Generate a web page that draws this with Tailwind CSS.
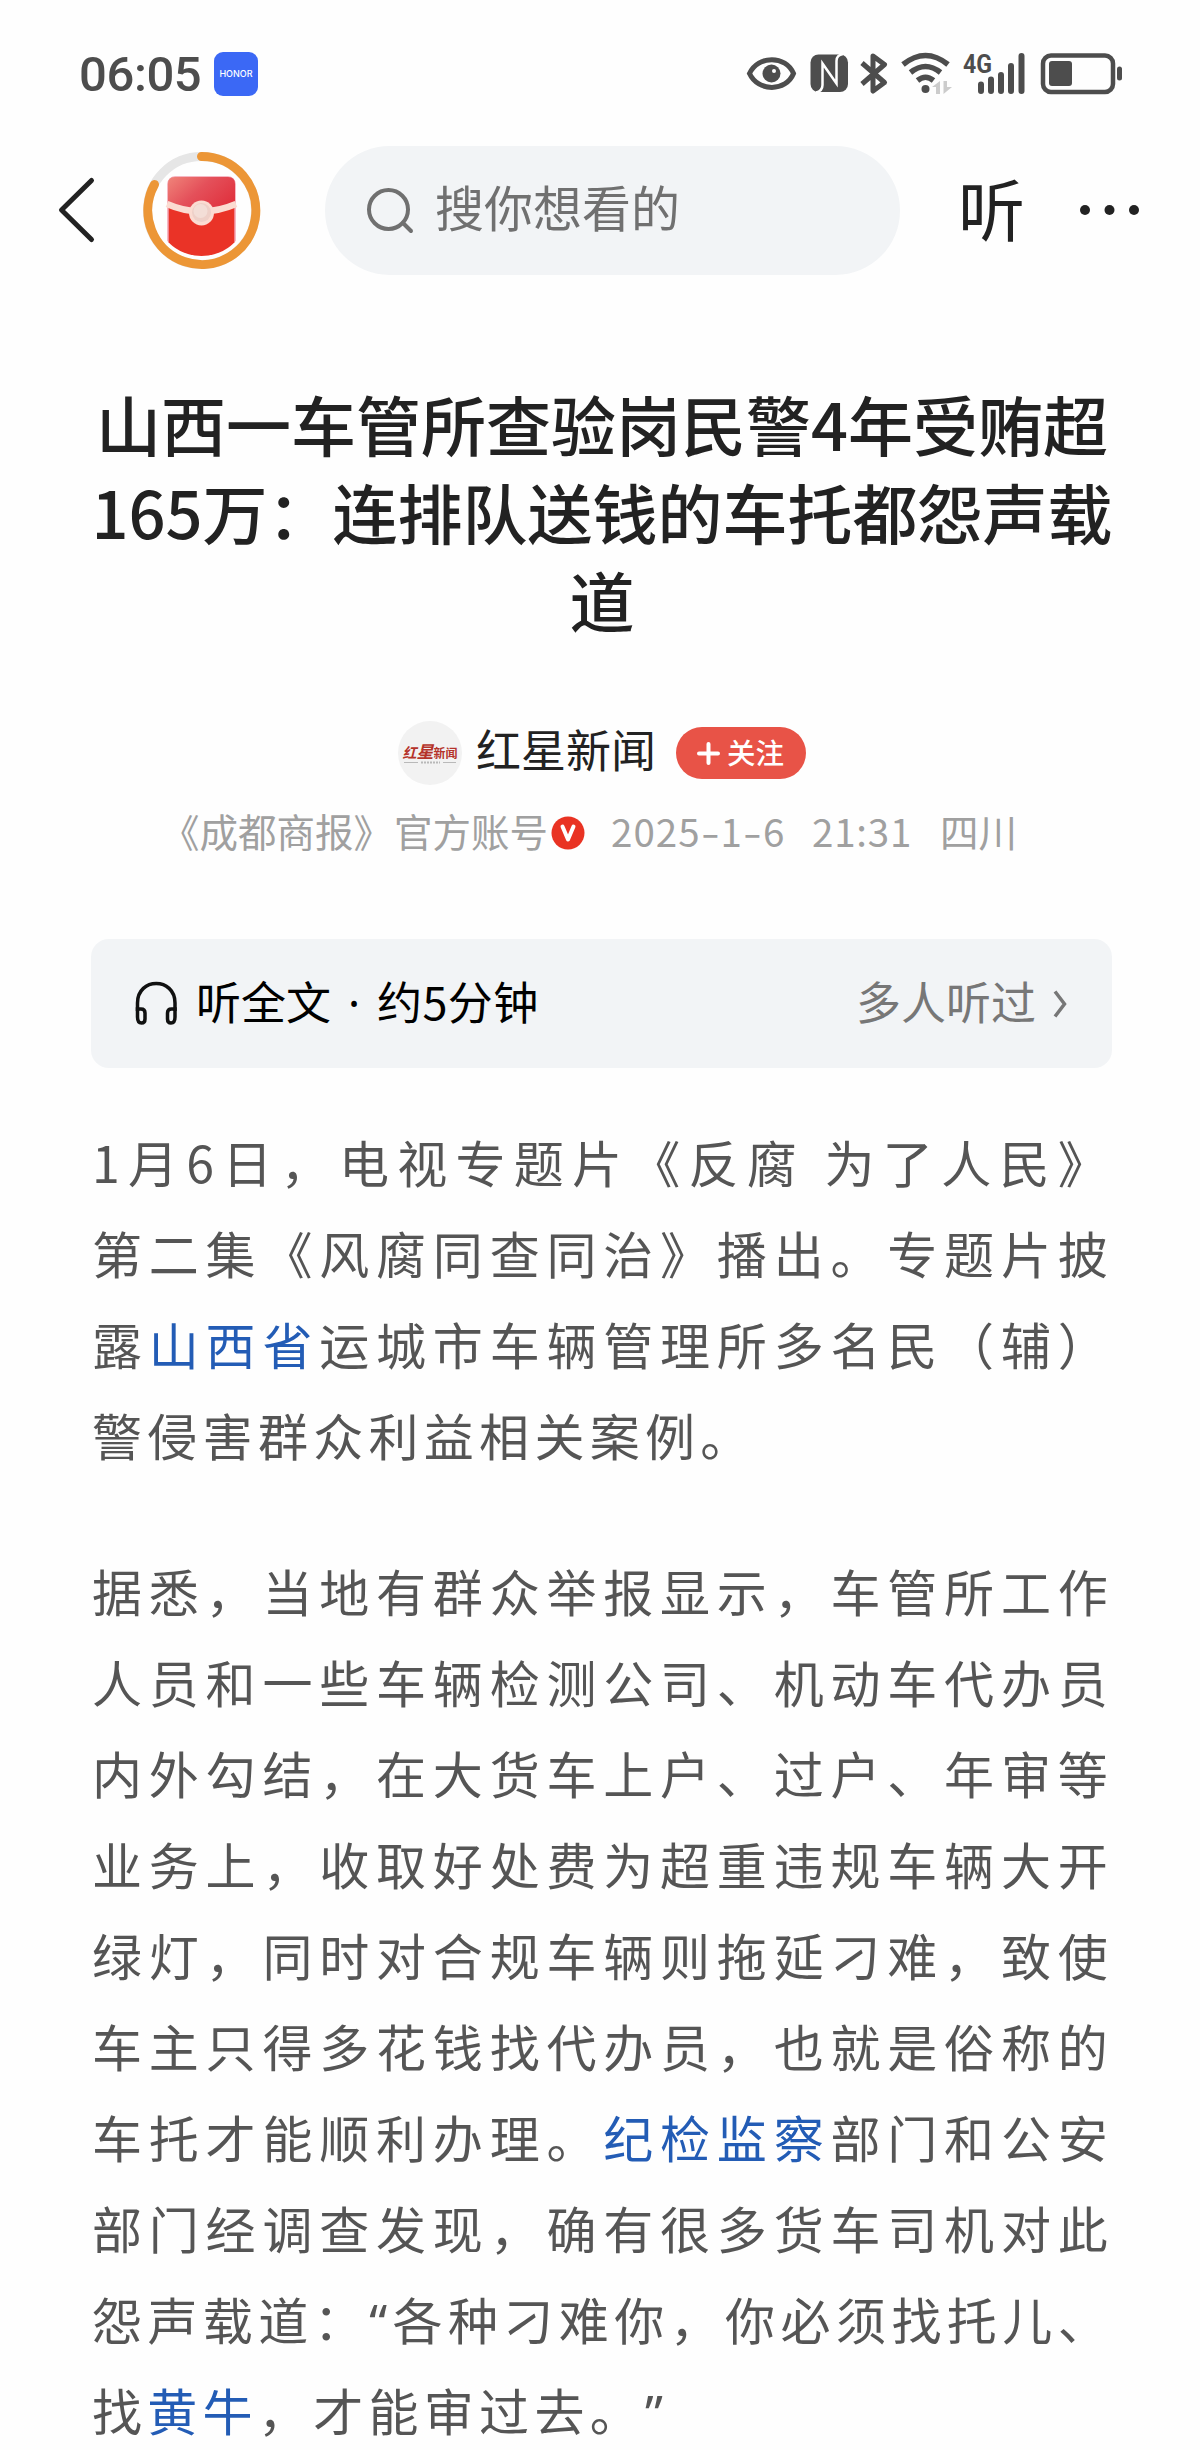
<!DOCTYPE html>
<html lang="zh-CN">
<head>
    <meta charset="UTF-8">
    <meta name="viewport" content="width=device-width, initial-scale=1.0">
    <script src="https://cdn.jsdelivr.net/npm/@tailwindcss/browser@4"></script>
    <title>红星新闻</title>
</head>
<body class="bg-[#fefefe] font-['Noto_Sans_CJK_SC',sans-serif] w-[1200px] h-[2450px] overflow-hidden text-[#222]">

<!-- status bar -->
<div class="flex items-center h-[148px] pl-[79px] pr-[76px]">
    <span class="font-['Roboto',sans-serif] font-medium text-[49px] tracking-[-0.4px] leading-none text-[#4d4d4d] w-[135px] whitespace-nowrap">06:05</span>
    <span class="w-11 h-11 rounded-[9px] bg-[#3b68f5] flex items-center justify-center text-white text-[9px] font-['Inter',sans-serif] font-medium">HONOR</span>
    <svg class="ml-auto" width="380" height="60" viewBox="744 44 380 60" fill="none" stroke="#4d4d4d">
        <path d="M749.500 73.500C758 55 786 55 793.500 73.500C786 92 758 92 749.500 73.500Z" stroke-width="5"/>
        <circle cx="771.500" cy="73.500" r="9" fill="#4d4d4d" stroke="none"/>
        <circle cx="774" cy="71" r="2" fill="#fff" stroke="none"/>
        <rect x="810.500" y="54.500" width="37.500" height="37.500" rx="8" fill="#4d4d4d" stroke="none"/>
        <path d="M816 92.500Q822.500 91 822.500 85V63.500L836.500 83.500V61Q836.500 55 843 54" stroke="#fff" stroke-width="2.500"/>
        <path d="M862 63L884.500 82.500L873 91V56L884.500 64.500L862 84" stroke-width="5" stroke-linejoin="round"/>
        <path d="M903 64.500Q925.500 46.500 948 64.500M910.500 72.500Q925.500 60.500 940.500 72.500M917.500 80.500Q925.500 74 933.500 80.500" stroke-width="5.500"/>
        <circle cx="925.500" cy="89" r="4" fill="#4d4d4d" stroke="none"/>
        <path d="M932 87L940 81V94H936V87ZM943.500 81H947V87H952L943.500 94Z" fill="#ccc" stroke="none"/>
        <text x="963" y="73" font-family="Roboto" font-weight="700" font-size="26" textLength="29" lengthAdjust="spacingAndGlyphs" fill="#4d4d4d" stroke="none">4G</text>
        <path d="M981 84.500V91M991 79.500V91M1001 75V91M1011 66V91M1021.500 56V91" stroke-width="6" stroke-linecap="round"/>
        <rect x="1043" y="55.500" width="70" height="36.500" rx="8" stroke-width="4.500"/>
        <rect x="1049" y="61" width="23" height="25" rx="3" fill="#4d4d4d" stroke="none"/>
        <path d="M1119.500 69V78" stroke-width="5" stroke-linecap="round"/>
    </svg>
</div>

<!-- top nav -->
<div class="flex items-center h-[124px] pl-[56px] pr-[60px]">
    <svg width="42" height="70" viewBox="56 175 42 70" fill="none" stroke="#222" stroke-width="5" stroke-linecap="round" stroke-linejoin="round">
        <path d="M91.500 180.500L61.500 210L91.500 239.500"/>
    </svg>
    <svg class="ml-[44px]" width="120" height="120" viewBox="142 150 120 120" fill="none">
        <defs>
            <linearGradient id="flap" x1="0" y1="0" x2="1" y2="0.600">
                <stop offset="0" stop-color="#f0847a"/>
                <stop offset="0.500" stop-color="#e4505a"/>
                <stop offset="1" stop-color="#e0333f"/>
            </linearGradient>
            <clipPath id="ring"><circle cx="201.500" cy="209.500" r="46.500"/></clipPath>
        </defs>
        <circle cx="201.500" cy="210.500" r="54" stroke="#e6e6e6" stroke-width="9"/>
        <path d="M201.500 156.500A54 54 0 1 1 154.500 184.500" stroke="#ec9636" stroke-width="9" stroke-linecap="round"/>
        <g clip-path="url(#ring)">
            <rect x="168" y="177" width="67" height="90" rx="7" fill="#ea3327" stroke="#f3a0b0" stroke-width="1.500"/>
            <path d="M168 203V184Q168 177 175 177H228Q235 177 235 184V203Q201 222 168 203Z" fill="url(#flap)"/>
            <path d="M167 204Q201 219 236 204" stroke="#fbdcd2" stroke-width="6.500"/>
        </g>
        <circle cx="201.500" cy="213" r="12.500" fill="#fbdcd2"/>
        <circle cx="201.500" cy="212.500" r="9.500" fill="#eed0c8"/>
        <circle cx="200.500" cy="211" r="7" fill="#f3ded7"/>
    </svg>
    <div class="ml-[63px] w-[575px] h-[129px] rounded-full bg-[#f2f4f6] flex items-center pl-[42px]">
        <svg width="48" height="48" viewBox="368 185 48 48" fill="none" stroke="#707070" stroke-width="4" stroke-linecap="round">
            <circle cx="389.500" cy="208.500" r="19.500"/>
            <path d="M404 222L412 230"/>
        </svg>
        <span class="ml-[20px] -mt-[10px] text-[49px] leading-none text-[#707070]">搜你想看的</span>
    </div>
    <span class="ml-[58px] -mt-2 text-[67px] leading-none">听</span>
    <svg class="ml-auto" width="60" height="12" viewBox="1080 203 60 12" fill="#222">
        <circle cx="1085" cy="209" r="5"/>
        <circle cx="1109.500" cy="209" r="5"/>
        <circle cx="1134" cy="209" r="5"/>
    </svg>
</div>

<!-- title -->
<h1 class="mt-[107px] pl-[4px] text-center text-[65px] leading-[88px] font-medium whitespace-nowrap">山西一车管所查验岗民警4年受贿超<br>165万：连排队送钱的车托都怨声载<br>道</h1>

<!-- author -->
<div class="mt-[78px] flex items-center h-16 pl-[398px]">
    <div class="w-16 h-16 rounded-full bg-[#f2f2f2] flex flex-col items-center justify-center text-[#b5332a] leading-none font-bold whitespace-nowrap">
        <div class="flex items-baseline italic">
            <span class="text-[14px] leading-none">红</span>
            <span class="text-[17px] leading-none">星</span>
            <span class="text-[12px] leading-none not-italic">新闻</span>
        </div>
        <svg class="mt-[2px]" width="52" height="3" viewBox="0 0 52 3" stroke="#b9b9b9"><path d="M0 1.500H14M39 1.500H52"/><path d="M17 1.500H36" stroke-width="2" stroke-dasharray="2 1"/></svg>
    </div>
    <span class="ml-[14px] -mt-[9px] text-[45px] leading-none">红星新闻</span>
    <div class="ml-[20px] w-[130px] h-[52px] rounded-full bg-[#e85347] text-white flex items-center pl-[21px]">
        <svg width="23" height="23" viewBox="0 0 23 23" stroke="#fff" stroke-width="4" stroke-linecap="round"><path d="M11.500 2V21M2 11.500H21"/></svg>
        <span class="ml-[7px] -mt-[2px] text-[28.5px] leading-none font-medium">关注</span>
    </div>
</div>
<div class="mt-[23px] flex items-center h-[44px] pl-[161px] text-[38.5px] leading-none text-[#a0a0a0] whitespace-nowrap">
    <span>《成都商报》</span>
    <span class="ml-[2px]">官方账号</span>
    <svg class="ml-[3px] mt-[6px]" width="34" height="34" viewBox="0 0 34 34" fill="none"><circle cx="17" cy="17" r="16.500" fill="#e93323"/><path d="M11.500 10.500L17 23.500L22.500 10.500" stroke="#fff" stroke-width="4" stroke-linecap="round" stroke-linejoin="round"/></svg>
    <span class="ml-[26px] w-[201px] tracking-[1px]">2025<span class="inline-block scale-x-140 w-[20px] text-center">-</span>1<span class="inline-block scale-x-140 w-[20px] text-center">-</span>6</span>
    <span class="w-[128px] tracking-[0.8px]">21:31</span>
    <span>四川</span>
</div>

<!-- listen bar -->
<div class="ml-[91px] mt-[87px] w-[1021px] h-[129px] rounded-[18px] bg-[#f2f4f6] flex items-center pl-[43px] pr-[43px] text-[45px] leading-none">
    <svg width="44" height="46" viewBox="134 981 44 46" fill="none" stroke="#111" stroke-width="3.500">
        <path d="M137.500 1011V1003C137.500 977 175 977 175 1003V1011"/>
        <path d="M137.500 1009H141Q145 1009 145 1013V1019Q145 1023 141.500 1023Q137.500 1023 137.500 1017ZM175 1009H171.500Q167.500 1009 167.500 1013V1019Q167.500 1023 171 1023Q175 1023 175 1017Z"/>
    </svg>
    <span class="ml-[18px] -mt-[6px] text-[#000]">听全文</span>
    <span class="w-[46px] -mt-[2px] text-center text-[#000] font-['Noto_Sans',sans-serif]">·</span>
    <span class="-mt-[6px] text-[#000] tracking-[0.4px]">约5分钟</span>
    <span class="ml-auto -mt-[6px] text-[#777]">多人听过</span>
    <svg class="ml-[15px]" width="18" height="30" viewBox="0 0 18 30" fill="none" stroke="#777" stroke-width="3.500"><path d="M4 2.500L13.500 15L4 27.500"/></svg>
</div>

<!-- article -->
<div class="ml-[92px] mt-[48px] w-[1021px] text-[50px] leading-[91px] text-[#555] tracking-[5.3px] whitespace-nowrap [text-spacing-trim:space-all]">
    <p>
        <span class="block [text-align-last:justify]">1月6日，电视专题片《反腐 为了人民》</span>
        <span class="block [text-align-last:justify]">第二集《风腐同查同治》播出。专题片披</span>
        <span class="block [text-align-last:justify]">露<a class="text-[#235cb5]">山西省</a>运城市车辆管理所多名民（辅）</span>
        <span class="block">警侵害群众利益相关案例。</span>
    </p>
    <p class="mt-[65px]">
        <span class="block [text-align-last:justify]">据悉，当地有群众举报显示，车管所工作</span>
        <span class="block [text-align-last:justify]">人员和一些车辆检测公司、机动车代办员</span>
        <span class="block [text-align-last:justify]">内外勾结，在大货车上户、过户、年审等</span>
        <span class="block [text-align-last:justify]">业务上，收取好处费为超重违规车辆大开</span>
        <span class="block [text-align-last:justify]">绿灯，同时对合规车辆则拖延刁难，致使</span>
        <span class="block [text-align-last:justify]">车主只得多花钱找代办员，也就是俗称的</span>
        <span class="block [text-align-last:justify]">车托才能顺利办理。<a class="text-[#235cb5]">纪检监察</a>部门和公安</span>
        <span class="block [text-align-last:justify]">部门经调查发现，确有很多货车司机对此</span>
        <span class="block [text-align-last:justify]">怨声载道：<span class="font-['Noto_Sans',sans-serif] leading-none">“</span>各种刁难你，你必须找托儿、</span>
        <span class="block">找<a class="text-[#235cb5]">黄牛</a>，才能审过去。<span class="font-['Noto_Sans',sans-serif] leading-none">”</span></span>
    </p>
</div>

</body>
</html>
